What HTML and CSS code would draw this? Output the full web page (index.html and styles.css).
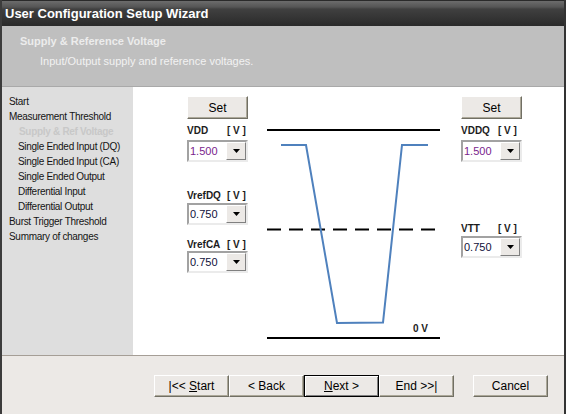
FILE: index.html
```html
<!DOCTYPE html>
<html lang="en">
  <head>
    <title>User Configuration Setup Wizard</title>
    <link rel="stylesheet" href="styles.css">
  </head>
  <body>
    <div class="wizard">
      <div class="titlebar">User Configuration Setup Wizard</div>

      <!-- page banner -->
      <div class="banner">
        <div class="banner-title">Supply &amp; Reference Voltage</div>
        <div class="banner-sub">Input/Output supply and reference voltages.</div>
      </div>

      <div class="main">
        <ul class="steps">
          <li>Start</li>
          <li>Measurement Threshold</li>
          <li class="sub current">Supply &amp; Ref Voltage</li>
          <li class="sub">Single Ended Input (DQ)</li>
          <li class="sub">Single Ended Input (CA)</li>
          <li class="sub">Single Ended Output</li>
          <li class="sub">Differential Input</li>
          <li class="sub">Differential Output</li>
          <li>Burst Trigger Threshold</li>
          <li>Summary of changes</li>
        </ul>

        <div class="panel">
          <div class="col col-left">
            <button class="btn btn-set">Set</button>
            <div class="field f-vdd">
              <div class="lbl"><span class="lbl-name">VDD</span><span>[ V ]</span></div>
              <div class="combo">
                <span class="combo-val purple">1.500</span>
                <span class="combo-btn"><svg width="7" height="4"><polygon points="0,0 7,0 3.5,4" fill="#000"/></svg></span>
              </div>
            </div>
            <div class="field f-dq">
              <div class="lbl"><span class="lbl-name">VrefDQ</span><span>[ V ]</span></div>
              <div class="combo">
                <span class="combo-val">0.750</span>
                <span class="combo-btn"><svg width="7" height="4"><polygon points="0,0 7,0 3.5,4" fill="#000"/></svg></span>
              </div>
            </div>
            <div class="field f-ca">
              <div class="lbl"><span class="lbl-name">VrefCA</span><span>[ V ]</span></div>
              <div class="combo">
                <span class="combo-val">0.750</span>
                <span class="combo-btn"><svg width="7" height="4"><polygon points="0,0 7,0 3.5,4" fill="#000"/></svg></span>
              </div>
            </div>
          </div>

          <!-- voltage levels diagram -->
          <svg class="scope" width="176" height="268" viewBox="0 0 176 268">
            <line x1="0" y1="43" x2="173" y2="43" stroke="#000" stroke-width="2"/>
            <line x1="0" y1="142.5" x2="171" y2="142.5" stroke="#000" stroke-width="2" stroke-dasharray="14 8"/>
            <line x1="0" y1="251" x2="173" y2="251" stroke="#000" stroke-width="2"/>
            <polyline points="14,58 39,58 70,236 116,235.5 135,58 161,58" fill="none" stroke="#4f81bd" stroke-width="2"/>
            <text x="146" y="244.5" class="zero">0 V</text>
          </svg>

          <div class="col col-right">
            <button class="btn btn-set">Set</button>
            <div class="field f-vdd">
              <div class="lbl"><span class="lbl-name r">VDDQ</span><span>[ V ]</span></div>
              <div class="combo">
                <span class="combo-val purple">1.500</span>
                <span class="combo-btn"><svg width="7" height="4"><polygon points="0,0 7,0 3.5,4" fill="#000"/></svg></span>
              </div>
            </div>
            <div class="field f-vtt">
              <div class="lbl"><span class="lbl-name r">VTT</span><span>[ V ]</span></div>
              <div class="combo">
                <span class="combo-val">0.750</span>
                <span class="combo-btn"><svg width="7" height="4"><polygon points="0,0 7,0 3.5,4" fill="#000"/></svg></span>
              </div>
            </div>
          </div>
        </div>
      </div>

      <div class="footer">
        <button class="btn btn-nav">|&lt;&lt; <u>S</u>tart</button>
        <button class="btn btn-nav">&lt; Back</button>
        <button class="btn btn-nav btn-default"><u>N</u>ext &gt;</button>
        <button class="btn btn-nav">End &gt;&gt;|</button>
        <button class="btn btn-nav btn-cancel">Cancel</button>
      </div>
    </div>
  </body>
</html>
```

FILE: styles.css
```css
* {
  margin: 0;
  padding: 0;
  box-sizing: border-box;
}

body {
  background: #fff;
  font-family: "Liberation Sans", Arial, sans-serif;
}

.wizard {
  width: 566px;
  height: 414px;
  border-left: 2px solid #3c3c3c;
  border-right: 2px solid #333;
  display: flex;
  flex-direction: column;
  overflow: hidden;
}

/* title bar */
.titlebar {
  height: 26px;
  padding: 2px 0 0 3px;
  border-top: 1px solid #2a2a2a;
  background: linear-gradient(#6c6c6c 0, #555 6px, #404040 8px, #2a2a2a 100%);
  color: #fff;
  font-size: 13px;
  font-weight: bold;
  line-height: 22px;
}

.banner {
  height: 61px;
  padding: 8px 0 0 18px;
  background: #bfbfbf;
  border-bottom: 1px solid #a9a9a9;
  color: #ececec;
  font-size: 11px;
  line-height: 14px;
}

.banner-title {
  font-weight: bold;
}

.banner-sub {
  margin-top: 6px;
  padding-left: 20px;
  color: #f2f2f2;
}

.main {
  display: flex;
  height: 268px;
}

/* left step list */
.steps {
  width: 131px;
  padding: 7px 0 0 7px;
  background: #dedede;
  list-style: none;
  font-size: 10px;
  line-height: 15px;
  letter-spacing: -0.3px;
  color: #141414;
}

.steps .sub {
  padding-left: 9px;
}

.steps .current {
  padding-left: 10px;
  font-weight: bold;
  color: #c8c8c8;
}

.panel {
  flex: 1;
  display: flex;
  padding-left: 54px;
  background: #fff;
}

.col {
  width: 62px;
  padding-top: 9px;
}

.col-right {
  width: 61px;
  margin-left: 18px;
}

.scope {
  margin-left: 18px;
  flex-shrink: 0;
}

.zero {
  font-family: "Liberation Sans", Arial, sans-serif;
  font-size: 10px;
  font-weight: bold;
  fill: #1c1c1c;
}

/* buttons */
.btn {
  display: block;
  background: #ece9e6;
  border: 1px solid;
  border-color: #fff #716f64 #716f64 #fff;
  box-shadow: inset -1px -1px #aca899;
  font-family: "Liberation Sans", Arial, sans-serif;
  font-size: 12px;
  color: #000;
}

.btn-set {
  width: 61px;
  height: 23px;
}

/* fields */
.field {
  margin-top: 6px;
}

.lbl {
  display: flex;
  height: 12px;
  margin-bottom: 3px;
  font-size: 10px;
  font-weight: bold;
  line-height: 12px;
  color: #1c1c1c;
}

.lbl-name {
  width: 40px;
}

.lbl-name.r {
  width: 37px;
}

.f-dq {
  margin-top: 28px;
}

.f-dq .lbl {
  margin-bottom: 1px;
}

.f-ca {
  margin-top: 14px;
}

.f-ca .lbl {
  margin-bottom: 0;
}

.f-vtt {
  margin-top: 61px;
}

.f-vtt .lbl {
  margin-bottom: 1px;
}

.combo {
  display: flex;
  width: 61px;
  height: 22px;
  border: 2px solid;
  border-color: #a2a2a2 #ebebeb #ebebeb #a2a2a2;
  background: #fff;
}

.combo-val {
  flex: 1;
  padding-left: 1px;
  font-size: 11px;
  line-height: 18px;
  color: #10103a;
}

.combo-val.purple {
  color: #7a1d8c;
}

.combo-btn {
  display: flex;
  align-items: center;
  justify-content: center;
  width: 20px;
  height: 18px;
  background: #ece9e6;
  border: 1px solid;
  border-color: #fff #808080 #808080 #fff;
}

/* bottom bar */
.footer {
  flex: 1;
  display: flex;
  align-items: flex-start;
  padding: 19px 0 0 152px;
  background: #ece9e6;
  border-top: 1px solid #a59e96;
}

.btn-nav {
  width: 75px;
  height: 22px;
}

.btn-default {
  border-color: #000;
  box-shadow: inset 1px 1px #fff, inset -1px -1px #808080;
}

.btn-cancel {
  margin-left: 19px;
}
```
